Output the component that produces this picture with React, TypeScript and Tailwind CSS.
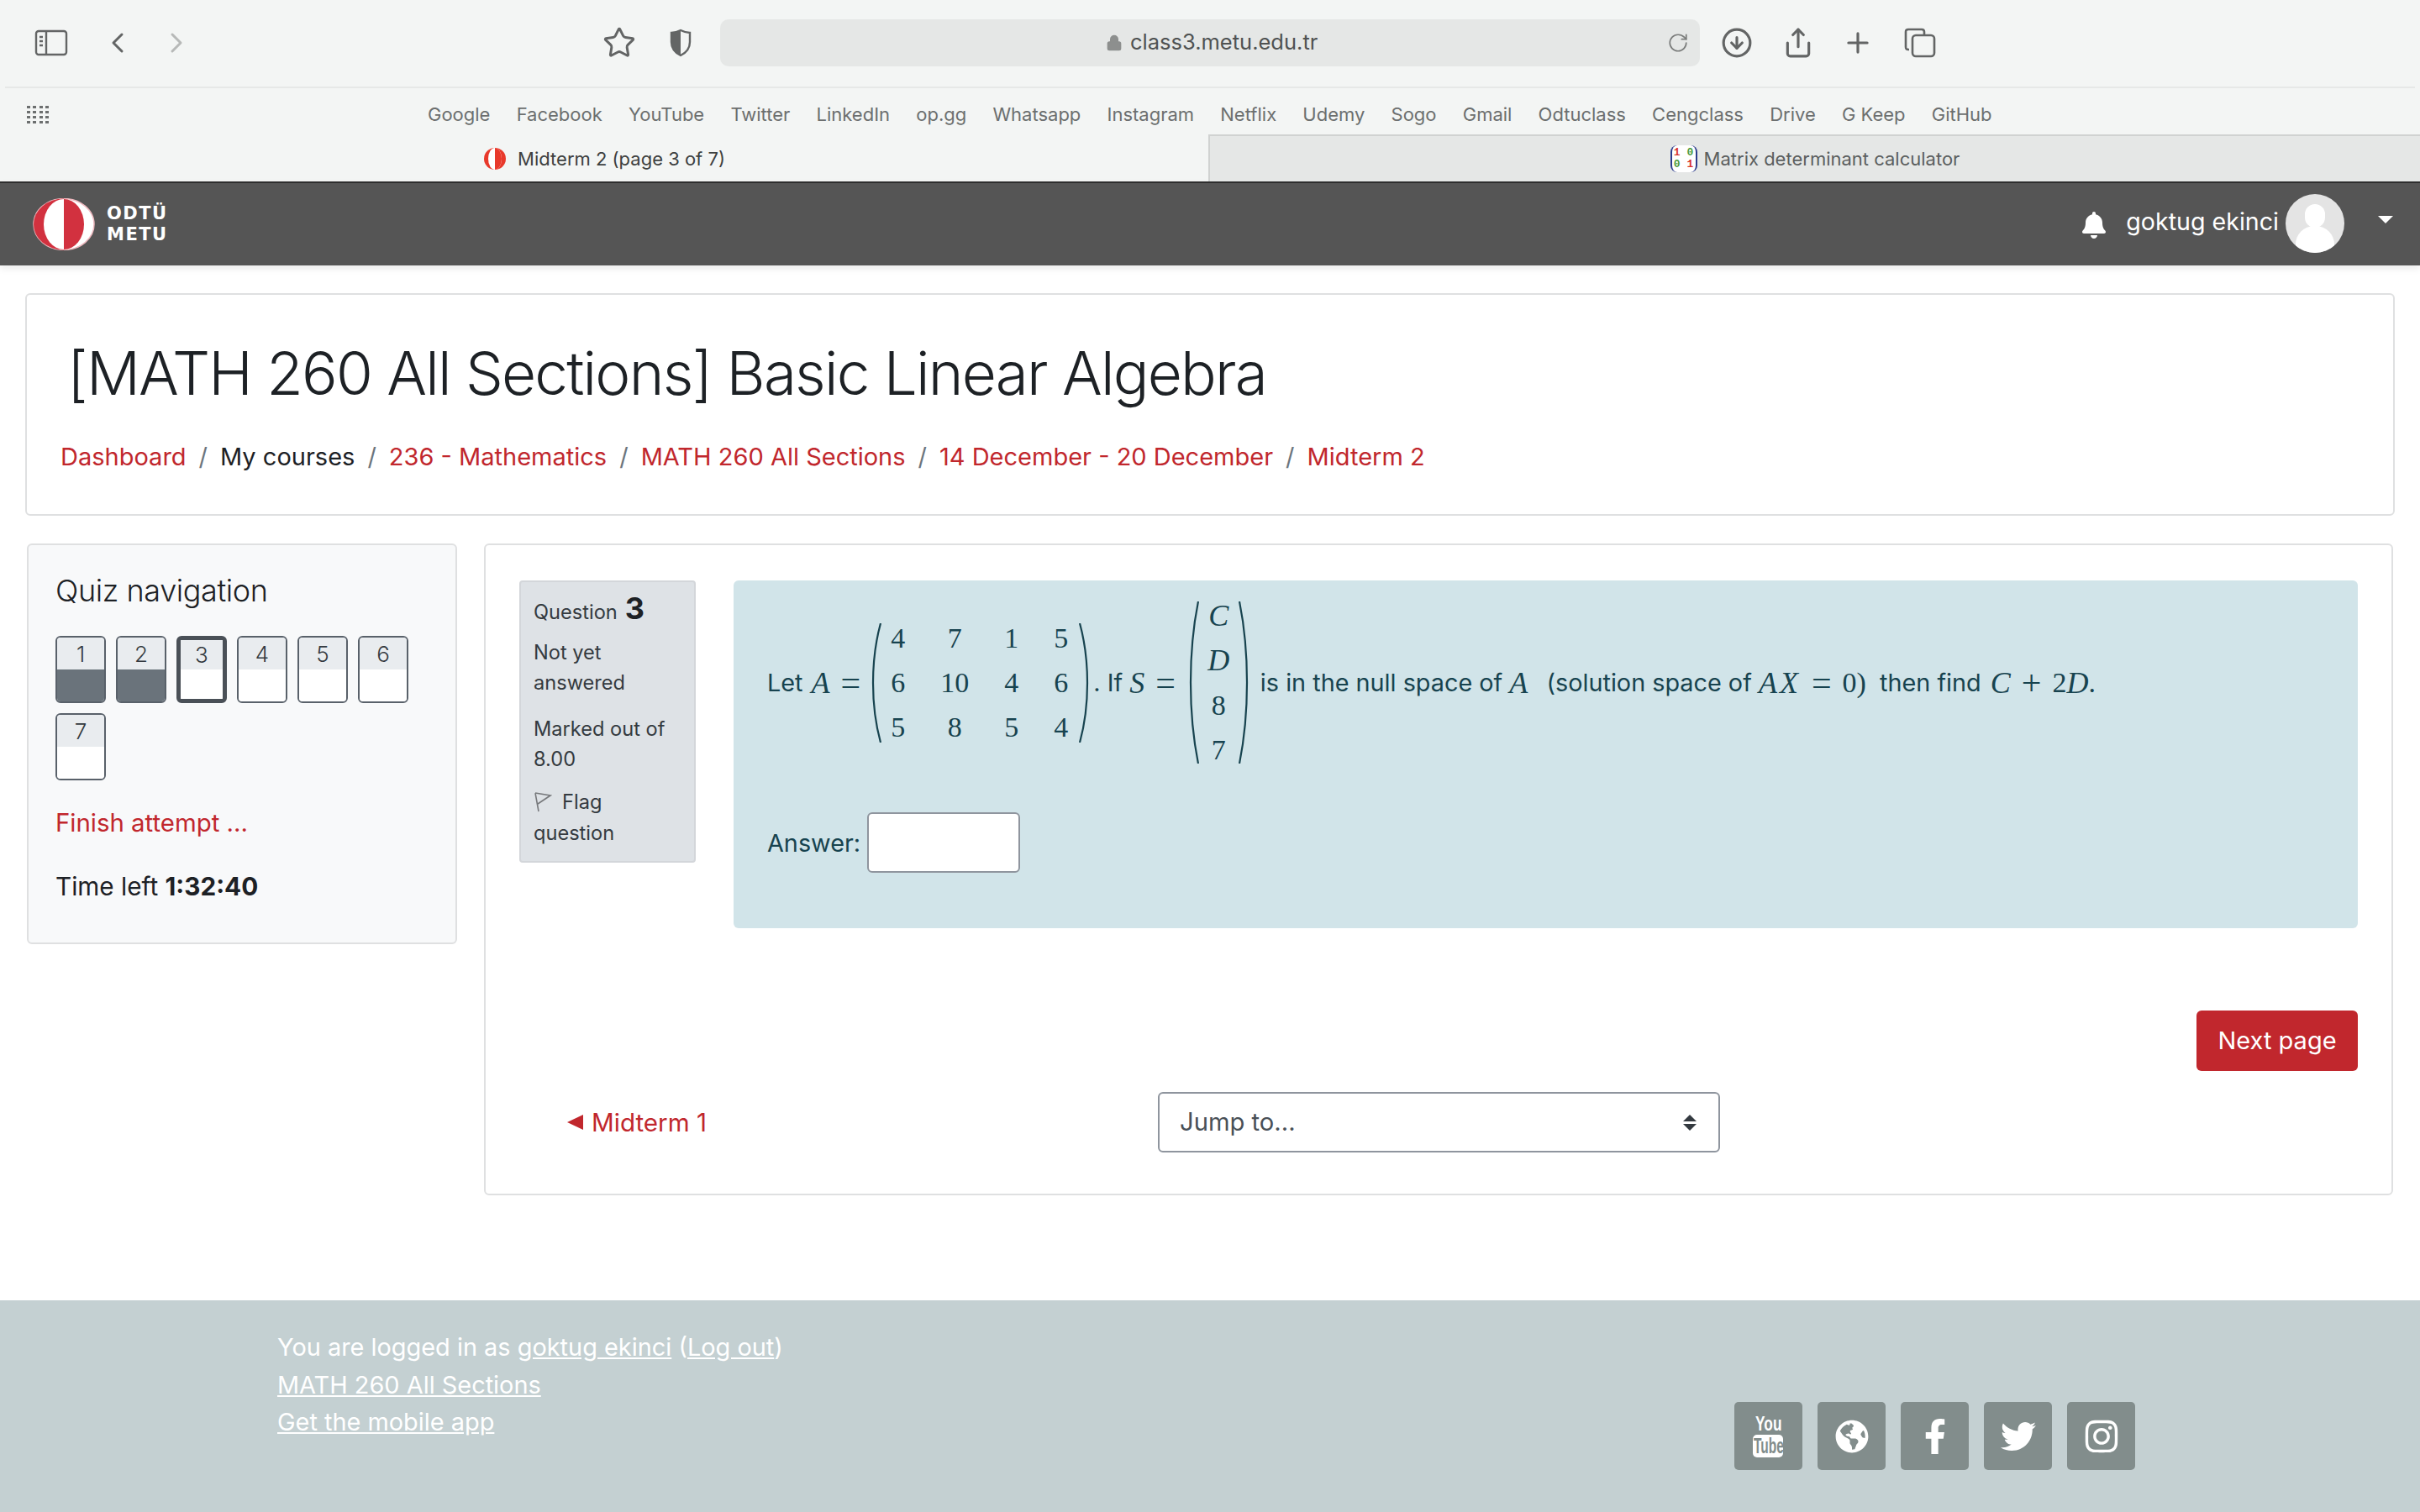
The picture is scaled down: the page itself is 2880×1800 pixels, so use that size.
import { ChevronLeft, ChevronRight, Star, Lock, RotateCw, CircleArrowDown, Share, Plus } from "lucide-react";
import { FaBell, FaGlobeAmericas, FaFacebookF, FaTwitter, FaInstagram } from "react-icons/fa";

const bookmarks = ["Google", "Facebook", "YouTube", "Twitter", "LinkedIn", "op.gg", "Whatsapp", "Instagram", "Netflix", "Udemy", "Sogo", "Gmail", "Odtuclass", "Cengclass", "Drive", "G Keep", "GitHub"];

const matrixA = ["4", "7", "1", "5", "6", "10", "4", "6", "5", "8", "5", "4"];

function Paren({ right, height }: { right?: boolean; height: number }) {
  return (
    <svg width="12" height={height} viewBox={`0 0 12 ${height}`} className={right ? "shrink-0 -scale-x-100" : "shrink-0"}>
      <path
        d={`M11 0 C4 ${height * 0.18} 2 ${height * 0.35} 2 ${height / 2} C2 ${height * 0.65} 4 ${height * 0.82} 11 ${height}`}
        fill="none"
        stroke="#17434f"
        strokeWidth="2.2"
      />
    </svg>
  );
}

function V({ children }: { children: string }) {
  return <span className="[font-family:'Liberation_Serif',serif] text-[36px] italic">{children}</span>;
}

function M({ children }: { children: string }) {
  return <span className="[font-family:'Liberation_Serif',serif] text-[34px]">{children}</span>;
}

function Op({ children }: { children: string }) {
  return <span className="mx-[13px] [font-family:'Liberation_Serif',serif] text-[42px] leading-none">{children}</span>;
}

function NavButton({ n, state }: { n: number; state?: "answered" | "current" }) {
  return (
    <div
      className={`flex h-[80px] w-[60px] flex-col overflow-hidden rounded-[6px] ${
        state === "current" ? "border-[5px] border-[#4a5057]" : "border-2 border-[#59616a]"
      }`}
    >
      <div
        className={`flex shrink-0 items-center justify-center bg-[#e9ecef] text-[26px] font-light text-[#343a40] ${
          state === "current" ? "h-[35px]" : "h-[38px]"
        }`}
      >
        {n}
      </div>
      <div className={`flex-1 ${state === "answered" ? "bg-[#6a737b]" : "bg-white"}`} />
    </div>
  );
}

function Social({ children }: { children: React.ReactNode }) {
  return <div className="flex h-[81px] w-[81px] items-center justify-center rounded-[5px] bg-[#828d8c] text-white">{children}</div>;
}

export default function App() {
  return (
    <div className="min-h-[1800px] w-[2880px] bg-white [font-family:Inter,sans-serif] text-[#1d2125]">
      {/* safari chrome */}
      <div className="h-[216px] bg-[#f3f5f4]">
        <div className="mx-[6px] flex h-[105px] items-center border-b-2 border-[#e6e8e7] pb-[2px] text-[#636565]">
          <svg width="40" height="32" viewBox="0 0 40 32" className="ml-[35px]" fill="none" stroke="#636565" strokeWidth="2.4">
            <rect x="2" y="2" width="36" height="28" rx="3" />
            <path d="M14 2v28" />
            <path d="M6 9h4M6 14h4M6 19h4" />
          </svg>
          <ChevronLeft size={40} strokeWidth={1.8} className="ml-[39px]" />
          <ChevronRight size={40} strokeWidth={1.8} className="ml-[30px] text-[#b7b9b8]" />
          <Star size={40} strokeWidth={1.8} className="ml-[487px]" />
          <svg width="28" height="34" viewBox="0 0 28 34" className="ml-[39px]">
            <path d="M14 2 C10 4 6 5 3 5 V16 C3 24 8 29 14 32 C20 29 25 24 25 16 V5 C22 5 18 4 14 2 Z" fill="none" stroke="#636565" strokeWidth="2.4" />
            <path d="M14 2 C10 4 6 5 3 5 V16 C3 24 8 29 14 32 Z" fill="#636565" />
          </svg>
          <div className="ml-[33px] flex h-[56px] w-[1166px] items-center rounded-[10px] bg-[#e5e7e6]">
            <Lock size={20} fill="#8d8f8e" strokeWidth={2} className="ml-[459px] text-[#8d8f8e]" />
            <span className="ml-[9px] text-[25.5px] text-[#4f5252]">class3.metu.edu.tr</span>
            <RotateCw size={26} strokeWidth={1.6} className="ml-[416px] text-[#7a7c7b]" />
          </div>
          <CircleArrowDown size={38} strokeWidth={2} className="ml-[25px]" />
          <Share size={38} strokeWidth={2} className="ml-[35px]" />
          <Plus size={38} strokeWidth={2} className="ml-[33px]" />
          <svg width="38" height="36" viewBox="0 0 38 36" className="ml-[36px]" fill="none" stroke="#636565" strokeWidth="2.6">
            <path d="M6 26 H5 Q2 26 2 23 V5 Q2 2 5 2 H21 Q24 2 24 5 V8" />
            <rect x="10" y="9" width="26" height="25" rx="4" />
          </svg>
        </div>
        <div className="flex h-[55px] items-center pt-[8px] text-[22px] text-[#6c6f6f]">
          <div className="ml-[32px] grid w-[26px] grid-cols-4 gap-[3px]">
            {Array.from({ length: 16 }).map((_, i) => (
              <span key={i} className="h-[3px] w-[4px] bg-[#6c6f6f]" />
            ))}
          </div>
          <div className="ml-[451px] flex gap-[31.2px]">
            {bookmarks.map((b) => (
              <span key={b}>{b}</span>
            ))}
          </div>
        </div>
        <div className="flex h-[56px] text-[22px]">
          <div className="flex w-[1438px] items-center justify-center gap-[13px] pt-[2px] text-[#3d4040]">
            <svg width="28" height="28" viewBox="0 0 28 28">
              <circle cx="14" cy="14" r="13" fill="#e8392b" />
              <ellipse cx="14" cy="14" rx="8" ry="13" fill="white" />
              <path d="M14 1 A8 13 0 0 1 14 27 Z" fill="#e8392b" />
            </svg>
            <span>Midterm 2 (page 3 of 7)</span>
          </div>
          <div className="flex flex-1 items-center justify-center gap-[8px] border-t-2 border-l-2 border-[#d0d2d1] bg-[#e5e7e6] text-[#5c5f5f]">
            <div className="flex h-[32px] w-[32px] flex-col items-center justify-center rounded-[8px] border-x-2 border-[#2b3a8c] bg-white [font-family:'Liberation_Mono',monospace] text-[13px] leading-[14px] font-bold">
              <span><span className="text-[#d8322a]">1</span> <span className="text-[#4c9a3b]">0</span></span>
              <span><span className="text-[#4c9a3b]">0</span> <span className="text-[#d8322a]">1</span></span>
            </div>
            <span>Matrix determinant calculator</span>
          </div>
        </div>
      </div>

      {/* site header */}
      <header className="flex h-[100px] items-center border-t-2 border-[#2e2e2e] bg-[#555555] pr-[32px] pl-[39px] text-white shadow-[0_4px_8px_rgba(0,0,0,0.08)]">
        <svg width="74" height="62" viewBox="0 0 74 62">
          <ellipse cx="37" cy="31" rx="36" ry="30.5" fill="white" stroke="#eeb9bf" strokeWidth="1.5" />
          <path d="M37 .5 A36 30.5 0 0 0 37 61.5 Z" fill="#d2313f" />
          <ellipse cx="37" cy="31" rx="24" ry="30" fill="white" />
          <path d="M37 1 A24 30 0 0 1 37 61 Z" fill="#d2313f" />
        </svg>
        <div className="ml-[14px] flex flex-col [font-family:'DejaVu_Sans',sans-serif] text-[21px] leading-[25px] font-bold tracking-[1.5px]">
          <span>ODTÜ</span>
          <span>METU</span>
        </div>
        <FaBell size={32} className="mt-[2px] ml-auto" />
        <span className="ml-[22px] -translate-y-[3px] text-[28.6px] leading-none">goktug ekinci</span>
        <div className="relative ml-[8px] h-[70px] w-[70px] -translate-y-[1px] overflow-hidden rounded-full bg-[#e4e4e4]">
          <div className="mx-auto mt-[12px] h-[28px] w-[24px] rounded-full bg-white" />
          <div className="mx-auto -mt-[2px] h-[40px] w-[46px] rounded-t-[22px] bg-white" />
        </div>
        <div className="mb-[6px] ml-[40px] h-0 w-0 -translate-y-[3px] border-x-[9px] border-t-[9px] border-x-transparent border-t-white" />
      </header>

      {/* course title */}
      <div className="mx-[30px] mt-[33px] h-[265px] rounded-[6px] border-2 border-[#dfe0e1] pt-[51px] pl-[40px]">
        <h1 className="ml-[8px] text-[71px] leading-[1.2] font-light tracking-[-1.8px]">[MATH 260 All Sections] Basic Linear Algebra</h1>
        <div className="mt-[35px] flex gap-[15px] text-[29px] leading-[44px] text-[#c1272d]">
          <span>Dashboard</span>
          <span className="text-[#6c757d]">/</span>
          <span className="text-[#1d2125]">My courses</span>
          <span className="text-[#6c757d]">/</span>
          <span>236 - Mathematics</span>
          <span className="text-[#6c757d]">/</span>
          <span>MATH 260 All Sections</span>
          <span className="text-[#6c757d]">/</span>
          <span>14 December - 20 December</span>
          <span className="text-[#6c757d]">/</span>
          <span>Midterm 2</span>
        </div>
      </div>

      <div className="mt-[33px] flex items-start pr-[32px] pl-[32px]">
        {/* quiz navigation */}
        <aside className="h-[477px] w-[512px] rounded-[6px] border-2 border-[#dfe0e1] bg-[#f8f9fa] pt-[31px] pl-[32px]">
          <h2 className="text-[36px] leading-[46px] font-light tracking-[-0.4px]">Quiz navigation</h2>
          <div className="mt-[31px] flex w-[440px] flex-wrap gap-x-[12px] gap-y-[12px]">
            <NavButton n={1} state="answered" />
            <NavButton n={2} state="answered" />
            <NavButton n={3} state="current" />
            <NavButton n={4} />
            <NavButton n={5} />
            <NavButton n={6} />
            <NavButton n={7} />
          </div>
          <div className="mt-[29px] text-[29.4px] leading-[44px] text-[#c1272d]">Finish attempt ...</div>
          <div className="mt-[31px] text-[29.7px] leading-[44px]">
            Time left <b className="font-bold">1:32:40</b>
          </div>
        </aside>

        {/* question */}
        <main className="ml-[32px] h-[776px] w-[2272px] rounded-[6px] border-2 border-[#dfe0e1] px-[40px] pt-[42px]">
          <div className="flex items-start">
            <div className="h-[336px] w-[210px] shrink-0 rounded-[4px] border-2 border-[#d3d6da] bg-[#dee2e6] pt-[13px] pl-[15px] text-[23.6px] leading-[36px] text-[#343a40]">
              <div className="flex h-[42px] items-baseline gap-[9px]">
                Question <b className="text-[36px] font-bold text-[#1d2125]">3</b>
              </div>
              <div className="mt-[11px]">Not yet<br />answered</div>
              <div className="mt-[19px]">Marked out of<br />8.00</div>
              <div className="mt-[15px]">
                <span className="inline-flex h-[36px] items-center gap-[12px]">
                  <svg width="22" height="24" viewBox="0 0 22 24" fill="none" stroke="#77797c" strokeWidth="1.6">
                    <path d="M2 1 L6 23 M2 1 L20 4 L5 14" />
                  </svg>
                  Flag
                </span>
                <div className="-mt-[3px]">question</div>
              </div>
            </div>
            <div className="ml-[45px] h-[414px] w-[1933px] rounded-[6px] bg-[#d1e4e9] pt-[25px] pl-[40px] text-[28.8px] text-[#17434f]">
              <div className="flex h-[193px] items-center whitespace-pre">
                <span className="mr-[2px]">Let </span>
                <V>A</V>
                <Op>=</Op>
                <div className="flex items-center">
                  <Paren height={142} />
                  <div className="mr-[13px] ml-[11px] grid grid-cols-[auto_auto_auto_auto] justify-items-center gap-x-[42px] [font-family:'Liberation_Serif',serif] text-[34px] leading-[53px]">
                    {matrixA.map((c, i) => (
                      <span key={i}>{c}</span>
                    ))}
                  </div>
                  <Paren right height={142} />
                </div>
                <span className="ml-[5px]">. If </span>
                <V>S</V>
                <Op>=</Op>
                <div className="ml-[3px] flex items-center">
                  <Paren height={193} />
                  <div className="flex w-[47px] flex-col items-center [font-family:'Liberation_Serif',serif] text-[34px] leading-[53px]">
                    <i className="text-[36px]">C</i>
                    <i className="text-[36px]">D</i>
                    <span>8</span>
                    <span>7</span>
                  </div>
                  <Paren right height={193} />
                </div>
                <span className="ml-[14px]">is in the null space of </span>
                <V>A</V>
                <span className="ml-[6px]">  (solution space of </span>
                <span className="tracking-[3px]"><V>AX</V></span>
                <Op>=</Op>
                <M>0)</M>
                <span className="mr-[3px]">  then find </span>
                <V>C</V>
                <Op>+</Op>
                <M>2</M>
                <V>D</V>
                <M>.</M>
              </div>
              <div className="mt-[59px] flex items-center">
                <span>Answer:</span>
                <div className="ml-[8px] h-[72px] w-[182px] -translate-y-[1px] rounded-[6px] border-2 border-[#8f959e] bg-white" />
              </div>
            </div>
          </div>
          <div className="flex justify-end pt-[98px]">
            <div className="flex h-[72px] w-[192px] items-center justify-center rounded-[6px] bg-[#c1272d] text-[29px] text-white">Next page</div>
          </div>
          <div className="mt-[25px] flex items-center">
            <div className="ml-[57px] flex w-[703px] items-center gap-[10px] text-[29.6px] text-[#c1272d]">
              <span className="h-0 w-0 border-y-[9px] border-r-[19px] border-y-transparent border-r-[#c1272d]" />
              Midterm 1
            </div>
            <div className="flex h-[72px] w-[669px] items-center justify-between rounded-[6px] border-2 border-[#8f959e] pr-[26px] pl-[24px] text-[29.2px] text-[#495057]">
              Jump to...
              <div className="flex flex-col gap-[3px]">
                <span className="h-0 w-0 border-x-[8px] border-b-[8px] border-x-transparent border-b-[#343a40]" />
                <span className="h-0 w-0 border-x-[8px] border-t-[8px] border-x-transparent border-t-[#343a40]" />
              </div>
            </div>
          </div>
        </main>
      </div>

      {/* footer */}
      <footer className="mt-[125px] flex h-[252px] items-start bg-[#c4d0d2] pt-[34px] pl-[330px] text-[28.9px] leading-[44.5px] text-white">
        <div>
          <div>
            You are logged in as <u>goktug ekinci</u> (<u>Log out</u>)
          </div>
          <div><u>MATH 260 All Sections</u></div>
          <div><u>Get the mobile app</u></div>
        </div>
        <div className="mt-[87px] ml-auto mr-[339px] flex gap-[18px]">
          <Social>
            <div className="flex flex-col items-center [font-family:'Liberation_Sans',sans-serif] font-bold">
              <span className="scale-x-[.72] text-[24px] leading-[20px]">You</span>
              <span className="mt-[3px] flex h-[27px] w-[36px] items-center justify-center rounded-[5px] bg-white text-[#828d8c]">
                <span className="scale-x-[.62] text-[25px] leading-none">Tube</span>
              </span>
            </div>
          </Social>
          <Social><FaGlobeAmericas size={40} /></Social>
          <Social><FaFacebookF size={42} /></Social>
          <Social><FaTwitter size={42} /></Social>
          <Social><FaInstagram size={44} /></Social>
        </div>
      </footer>
    </div>
  );
}
